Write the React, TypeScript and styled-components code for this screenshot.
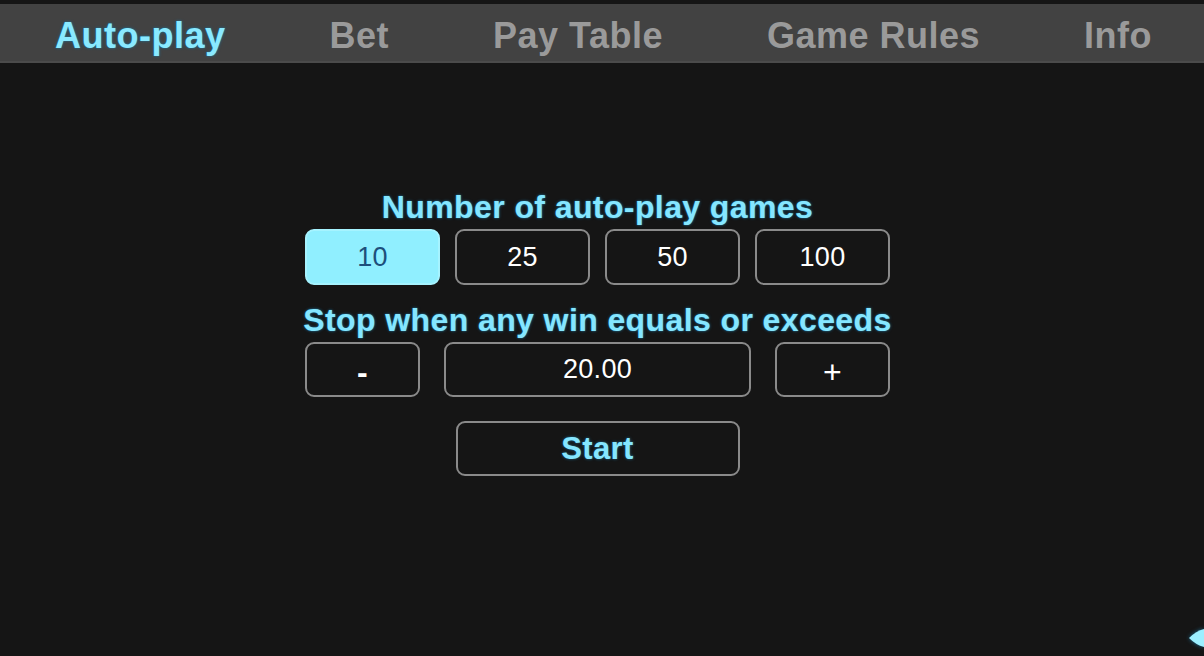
import React, { useState } from 'react';
import styled, { createGlobalStyle } from 'styled-components';

const GlobalStyle = createGlobalStyle`
  html, body {
    margin: 0;
    padding: 0;
    background: #151515;
  }
  body {
    font-family: 'Liberation Sans', Arial, sans-serif;
  }
`;

const Screen = styled.div`
  position: relative;
  width: 1204px;
  height: 656px;
  overflow: hidden;
  background: #151515;
  display: flex;
  flex-direction: column;
`;

const TabBar = styled.nav`
  margin-top: 4px;
  height: 59px;
  box-sizing: border-box;
  padding: 6px 0 0 55px;
  background: #424242;
  border-bottom: 2px solid #4b4b4b;
  display: flex;
  align-items: center;
  gap: 104px;
`;

const Tab = styled.button<{ $active?: boolean }>`
  background: none;
  border: none;
  padding: 0;
  font-family: 'Liberation Sans', Arial, sans-serif;
  font-size: 36px;
  font-weight: 700;
  letter-spacing: 0.5px;
  cursor: pointer;
  color: ${({ $active }) => ($active ? '#8ae9ff' : '#9a9a9a')};
  text-shadow: ${({ $active }) => ($active ? '0 0 3px #1f6f95, 0 0 1px #1f6f95' : 'none')};
`;

const Panel = styled.main`
  display: flex;
  flex-direction: column;
  align-items: center;
  padding-top: 126px;
  padding-right: 9px;
`;

const Section = styled.div`
  width: 585px;
  display: flex;
  flex-direction: column;
  align-items: center;
`;

const Heading = styled.div<{ $gapAbove?: number }>`
  font-size: 32px;
  font-weight: 700;
  letter-spacing: 0.4px;
  line-height: 36px;
  color: #85e6ff;
  text-shadow: 0 0 3px #1c6a90, 0 0 1px #1c6a90;
  white-space: nowrap;
  margin-top: ${({ $gapAbove }) => $gapAbove ?? 0}px;
  margin-bottom: 4px;
`;

const CountRow = styled.div`
  display: grid;
  grid-template-columns: repeat(4, 1fr);
  gap: 15px;
  width: 100%;
`;

const StopRow = styled.div`
  display: grid;
  grid-template-columns: 115px 1fr 115px;
  gap: 24px;
  width: 100%;
`;

const Box = styled.button<{ $selected?: boolean; $height?: number }>`
  height: ${({ $height }) => $height ?? 56}px;
  box-sizing: border-box;
  border-radius: 9px;
  border: 2px solid ${({ $selected }) => ($selected ? '#a6f3ff' : '#8a8a8a')};
  background: ${({ $selected }) => ($selected ? '#90efff' : '#151515')};
  color: ${({ $selected }) => ($selected ? '#1d4f7c' : '#ffffff')};
  font-family: 'Liberation Sans', Arial, sans-serif;
  font-size: 27px;
  font-weight: 400;
  letter-spacing: 0.3px;
  display: flex;
  align-items: center;
  justify-content: center;
  padding: 0;
  cursor: pointer;
`;

const Sign = styled.span<{ $bold?: boolean }>`
  font-size: 32px;
  font-weight: ${({ $bold }) => ($bold ? 700 : 400)};
  transform: translateY(3px);
`;

const StartButton = styled(Box)`
  width: 284px;
  margin-top: 24px;
  color: #85e6ff;
  font-size: 31px;
  font-weight: 700;
  letter-spacing: 0.4px;
  text-shadow: 0 0 3px #1c6a90;
`;

const EdgeArrow = styled.svg`
  position: absolute;
  right: 0;
  bottom: 8px;
  filter: drop-shadow(0 0 2px #1c6a90);
`;

const tabs = ['Auto-play', 'Bet', 'Pay Table', 'Game Rules', 'Info'];
const counts = [10, 25, 50, 100];

export default function App() {
  const [tab, setTab] = useState('Auto-play');
  const [count, setCount] = useState(10);
  const [limit, setLimit] = useState(20);

  return (
    <>
      <GlobalStyle />
      <Screen>
        <TabBar>
          {tabs.map((t) => (
            <Tab key={t} $active={t === tab} onClick={() => setTab(t)}>
              {t}
            </Tab>
          ))}
        </TabBar>

        <Panel>
          <Section>
            <Heading>Number of auto-play games</Heading>
            <CountRow>
              {counts.map((c) => (
                <Box key={c} $selected={c === count} onClick={() => setCount(c)}>
                  {c}
                </Box>
              ))}
            </CountRow>

            <Heading $gapAbove={17}>Stop when any win equals or exceeds</Heading>
            <StopRow>
              <Box $height={55} onClick={() => setLimit((v) => Math.max(0, v - 1))}>
                <Sign $bold>-</Sign>
              </Box>
              <Box $height={55}>{limit.toFixed(2)}</Box>
              <Box $height={55} onClick={() => setLimit((v) => v + 1)}>
                <Sign>+</Sign>
              </Box>
            </StopRow>

            <StartButton $height={55}>Start</StartButton>
          </Section>
        </Panel>

        <EdgeArrow width="16" height="20" viewBox="0 0 16 20">
          <path d="M1 10 Q8 3 16 1 L16 19 Q8 17 1 10 Z" fill="#9cefff" />
        </EdgeArrow>
      </Screen>
    </>
  );
}
